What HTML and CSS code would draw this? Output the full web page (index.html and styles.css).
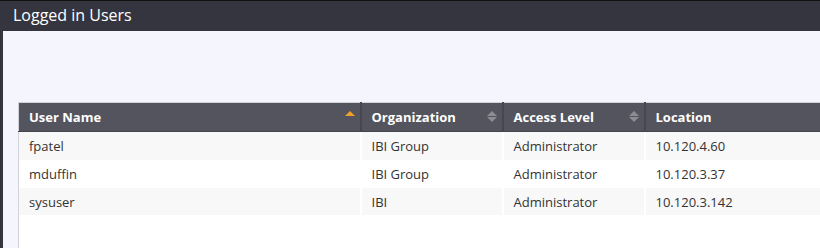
FILE: index.html
```html
<!DOCTYPE html>
<html lang="en">

<head>
    <meta charset="UTF-8">
    <title>Logged in Users</title>
    <link rel="stylesheet" href="styles.css">
</head>

<body>
    <div class="panel">
        <div class="panel-title">Logged in Users</div>
        <div class="panel-body">
            <table class="grid">
                <colgroup>
                    <col class="c-user">
                    <col class="c-org">
                    <col class="c-access">
                    <col class="c-loc">
                </colgroup>
                <thead>
                    <tr>
                        <th>User Name <span class="sort asc"></span></th>
                        <th>Organization <span class="sort"></span></th>
                        <th>Access Level <span class="sort"></span></th>
                        <th>Location</th>
                    </tr>
                </thead>
                <tbody>
                    <tr>
                        <td>fpatel</td>
                        <td>IBI Group</td>
                        <td>Administrator</td>
                        <td>10.120.4.60</td>
                    </tr>
                    <tr>
                        <td>mduffin</td>
                        <td>IBI Group</td>
                        <td>Administrator</td>
                        <td>10.120.3.37</td>
                    </tr>
                    <tr>
                        <td>sysuser</td>
                        <td>IBI</td>
                        <td>Administrator</td>
                        <td>10.120.3.142</td>
                    </tr>
                </tbody>
            </table>
        </div>
    </div>
</body>

</html>
```

FILE: styles.css
```css
* {
    margin: 0;
    padding: 0;
    box-sizing: border-box;
}

body {
    width: 820px;
    height: 248px;
    overflow: hidden;
    background: #35353f;
    font-family: "Open Sans", "Noto Sans", sans-serif;
}

.panel {
    border-top: 1px solid #111;
    height: 248px;
    display: flex;
    flex-direction: column;
}

.panel-title {
    height: 30px;
    line-height: 28px;
    padding-left: 13px;
    color: #fff;
    font-size: 16px;
    background: #35353f;
}

.panel-body {
    flex: 1;
    margin-left: 3px;
    background: #f5f5fe;
    padding: 71px 0 0 15px;
    overflow: hidden;
}

.grid {
    width: 900px;
    border-collapse: collapse;
    background: #fff;
    border-top: 1px solid #d2d2da;
    border-left: 1px solid #d2d2da;
    font-size: 13px;
    color: #333;
    height: 200px;
    table-layout: fixed;
}

.c-user {
    width: 342px;
}

.c-org {
    width: 142px;
}

.c-access {
    width: 142px;
}

.grid th {
    height: 29px;
    background: #54545e;
    color: #fff;
    font-weight: 700;
    text-align: left;
    padding: 0 10px;
    border-right: 2px solid #46464e;
    border-bottom: 1px solid #44444c;
    position: relative;
}

.grid td {
    height: 28px;
    padding: 0 10px;
    border-right: 2px solid #fff;
    vertical-align: middle;
}

.grid tbody tr:nth-child(odd) td {
    background: #f8f8f8;
}

.grid tbody tr:last-child td {
    vertical-align: top;
    padding-top: 5px;
    height: auto;
    background: linear-gradient(#f8f8f8 0, #f8f8f8 27px, #fff 27px);
}

.sort {
    position: absolute;
    right: 5px;
    top: 8px;
    width: 10px;
    height: 11px;
}

.sort::before,
.sort::after {
    content: '';
    position: absolute;
    left: 0;
    border-left: 5px solid transparent;
    border-right: 5px solid transparent;
}

.sort::before {
    top: 0;
    border-bottom: 5px solid #8c8c94;
}

.sort::after {
    top: 6px;
    border-top: 5px solid #8c8c94;
}

.sort.asc::before {
    border-left-width: 5px;
    border-right-width: 5px;
    border-bottom: 5px solid #f0a02a;
}

.sort.asc::after {
    display: none;
}
```
